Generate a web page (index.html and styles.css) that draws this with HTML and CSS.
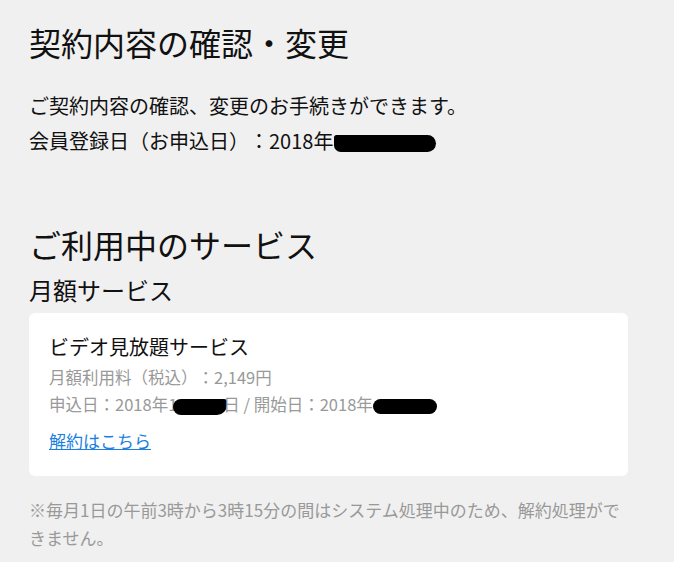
FILE: index.html
```html
<!DOCTYPE html>
<html lang="ja">
<head>
<meta charset="utf-8">
<title>契約内容の確認・変更</title>
<link rel="stylesheet" href="styles.css">
</head>
<body>
<main class="page">
  <h1 class="title">契約内容の確認・変更</h1>
  <div class="intro">
    <p>ご契約内容の確認、変更のお手続きができます。</p>
    <p>会員登録日（お申込日）：2018年<span class="redact redact-a"></span></p>
  </div>
  <h2 class="section">ご利用中のサービス</h2>
  <h3 class="sub">月額サービス</h3>
  <div class="card">
    <div class="card-title">ビデオ見放題サービス</div>
    <p class="meta">月額利用料（税込）：2,149円</p>
    <p class="meta">申込日：2018年1<span class="redact redact-b"></span>日 / 開始日：2018年<span class="redact redact-c"></span></p>
    <a class="cancel" href="#">解約はこちら</a>
  </div>
  <p class="note">※毎月1日の午前3時から3時15分の間はシステム処理中のため、解約処理ができません。</p>
</main>
</body>
</html>
```

FILE: styles.css
```css
html, body {
  margin: 0;
  padding: 0;
  background: #f0f0f0;
}
body {
  font-family: "Noto Sans CJK JP", "Noto Sans", sans-serif;
  color: #111;
  text-spacing-trim: space-all;
}
.page {
  padding: 18px 0 0 29px;
  width: 599px;
}
p { margin: 0; }
.title {
  margin: 0;
  font-size: 32px;
  font-weight: 400;
  line-height: 48px;
}
.intro {
  margin-top: 22px;
  font-size: 20px;
  line-height: 35px;
}
.section {
  margin: 62px 0 0;
  font-size: 32px;
  font-weight: 400;
  line-height: 48px;
}
.sub {
  margin: 4px 0 0;
  font-size: 24px;
  font-weight: 400;
  line-height: 36px;
}
.card {
  margin-top: 5px;
  background: #fff;
  border-radius: 6px;
  padding: 19px 20px 22px;
}
.card-title {
  font-size: 20px;
  line-height: 30px;
}
.meta {
  font-size: 16.5px;
  line-height: 27px;
  color: #999;
}
.meta:first-of-type { margin-top: 2px; }
.cancel {
  display: inline-block;
  margin-top: 9px;
  font-size: 17px;
  line-height: 27px;
  color: #1a80e0;
  text-decoration: underline;
}
.note {
  margin-top: 20px;
  font-size: 17px;
  line-height: 28px;
  color: #999;
}
.redact {
  display: inline-block;
  background: #000;
  vertical-align: middle;
}
.redact-a {
  width: 102px;
  height: 17px;
  margin-left: 1px;
  border-radius: 3px 10px 10px 8px;
}
.redact-b {
  width: 54px;
  height: 16px;
  border-radius: 8px 3px 10px 8px;
  margin-left: -4px;
  margin-right: -4px;
}
.redact-c {
  width: 64px;
  height: 15px;
  border-radius: 8px;
}
```
